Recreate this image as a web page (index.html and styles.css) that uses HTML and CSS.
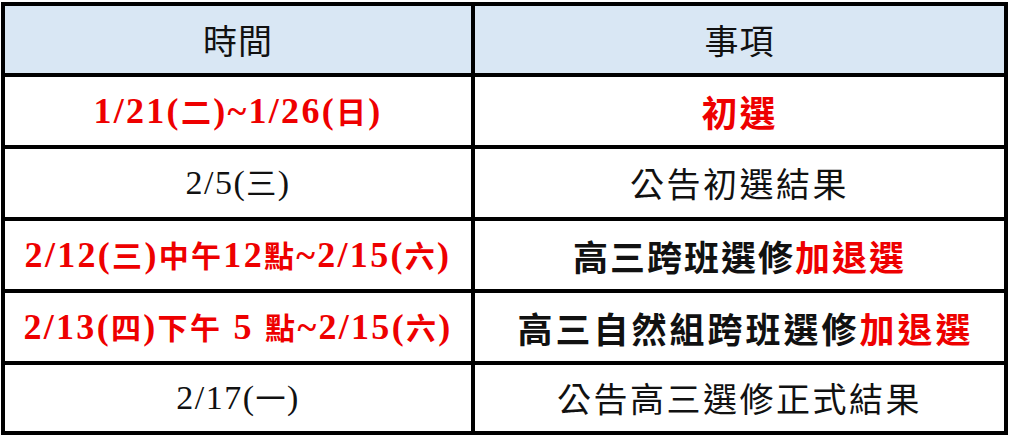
FILE: index.html
```html
<!DOCTYPE html>
<html lang="zh-Hant">
<head>
<meta charset="utf-8">
<title>選修時程</title>
<link rel="stylesheet" href="styles.css">
</head>
<body>
<div class="sheet">
  <div class="cell head"><span class="hd">時間</span></div>
  <div class="cell head"><span class="hd">事項</span></div>

  <div class="cell"><span class="date-red">1/21(<span class="cj">二</span>)~1/26(<span class="cj">日</span>)</span></div>
  <div class="cell"><span class="item-red">初選</span></div>

  <div class="cell"><span class="date">2/5(<span class="cjr">三</span>)</span></div>
  <div class="cell"><span class="item">公告初選結果</span></div>

  <div class="cell"><span class="date-red">2/12(<span class="cj">三</span>)<span class="cj">中午</span>12<span class="cj">點</span>~2/15(<span class="cj">六</span>)</span></div>
  <div class="cell"><span class="item-bold">高三跨班選修<span class="red">加退選</span></span></div>

  <div class="cell"><span class="date-red">2/13(<span class="cj">四</span>)<span class="cj">下午</span> 5 <span class="cj">點</span>~2/15(<span class="cj">六</span>)</span></div>
  <div class="cell shift"><span class="item-bold wide">高三自然組跨班選修<span class="red">加退選</span></span></div>

  <div class="cell"><span class="date">2/17(<span class="cjr">一</span>)</span></div>
  <div class="cell"><span class="item">公告高三選修正式結果</span></div>
</div>
</body>
</html>
```

FILE: styles.css
```css
html, body {
  margin: 0;
  padding: 0;
  background: #ffffff;
}

.sheet {
  margin: 2px 0 0 1px;
  width: 1007px;
  box-sizing: border-box;
  display: grid;
  grid-template-columns: 466px 529px;
  grid-template-rows: 67px 68px 68px 68px 68px 66px;
  gap: 4px;
  padding: 4px;
  background: #000000;
}

.cell {
  background: #ffffff;
  display: flex;
  align-items: center;
  justify-content: center;
  white-space: nowrap;
}

.cell.head {
  background: #d9e7f4;
}

.cell.shift {
  padding-left: 12px;
}

.hd {
  font-family: "Noto Sans CJK TC", sans-serif;
  font-size: 34px;
  letter-spacing: 1px;
  color: #111111;
  line-height: 1;
}

.date {
  font-family: "Liberation Serif", "Noto Sans CJK TC", serif;
  font-size: 34px;
  letter-spacing: 1.5px;
  color: #111111;
  line-height: 1;
}

.cjr {
  font-family: "Noto Sans CJK TC", sans-serif;
  font-size: 30px;
}

.date-red {
  font-family: "Liberation Serif", "Noto Sans CJK TC", serif;
  font-weight: 700;
  font-size: 36px;
  letter-spacing: 2.3px;
  color: #ee0000;
  line-height: 1;
}

.cj {
  font-family: "Noto Sans CJK TC", sans-serif;
  font-size: 30px;
}

.item {
  font-family: "Noto Sans CJK TC", sans-serif;
  font-size: 34px;
  letter-spacing: 2.5px;
  color: #111111;
  line-height: 1;
}

.item-bold {
  font-family: "Noto Sans CJK TC", sans-serif;
  font-weight: 700;
  font-size: 35px;
  letter-spacing: 2px;
  color: #111111;
  line-height: 1;
}

.item-bold.wide {
  letter-spacing: 3px;
}

.item-red {
  font-family: "Noto Sans CJK TC", sans-serif;
  font-weight: 700;
  font-size: 36px;
  letter-spacing: 2px;
  color: #ee0000;
  line-height: 1;
}

.red {
  color: #ee0000;
}
```
